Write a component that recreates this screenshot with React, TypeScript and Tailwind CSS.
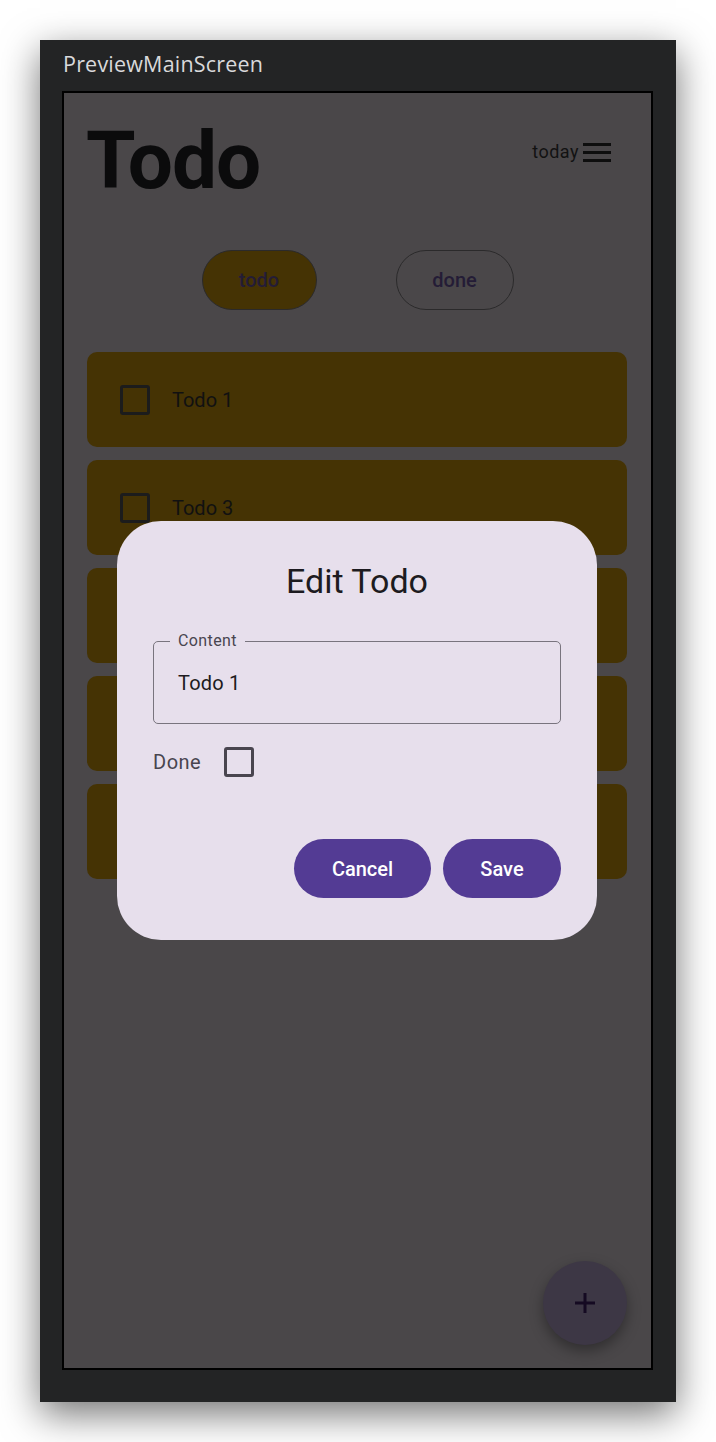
import React from "react";

const todos = ["Todo 1", "Todo 3", "", "", ""];

function Box({ className }: { className: string }) {
  return <span className={`block shrink-0 rounded-[3px] border-[3px] ${className}`} />;
}

export default function App() {
  return (
    <div className="min-h-[1442px] w-[716px] bg-white pt-10 pl-10" style={{ fontFamily: "Roboto, 'Noto Sans', sans-serif" }}>
      <div className="w-[636px] h-[1362px] bg-[#232425] shadow-[0_12px_36px_rgba(0,0,0,0.55)] flex flex-col pl-[22px] pt-[11px]">
        <div className="h-[40px] pl-[1px] text-[21.5px] leading-[26px] text-[#d9d9db] tracking-[0.2px]" style={{ fontFamily: "'Open Sans', 'DejaVu Sans', sans-serif" }}>
          PreviewMainScreen
        </div>

        <div className="relative w-[591px] h-[1279px] border-2 border-black bg-[#4a4749] overflow-hidden">
          <div className="flex justify-between items-start pl-[22px] pr-[40px] pt-[28px]">
            <h1 className="text-[80px] leading-[80px] font-bold text-[#0b0b0c] tracking-[-1px]">Todo</h1>
            <div className="flex items-center gap-[4px] mt-[20px]">
              <span className="text-[18px] leading-[22px] text-[#121212] tracking-[0.5px]">today</span>
              <svg width="28" height="22" viewBox="0 0 28 22">
                <rect x="0" y="2" width="28" height="3" fill="#0e0e0e" />
                <rect x="0" y="10" width="28" height="3" fill="#0e0e0e" />
                <rect x="0" y="18" width="28" height="3" fill="#0e0e0e" />
              </svg>
            </div>
          </div>

          <div className="flex justify-center gap-[79px] mt-[49px]">
            <button className="w-[115px] h-[60px] rounded-full bg-[#453304] border-[1.5px] border-[#2b2a2b] text-[20px] font-medium text-[#241c36]">
              todo
            </button>
            <button className="w-[118px] h-[60px] rounded-full border-[1.5px] border-[#2b2a2b] text-[20px] font-medium text-[#241c36]">
              done
            </button>
          </div>

          <div className="flex flex-col gap-[13px] mt-[42px] pl-[23px] pr-[24px]">
            {todos.map((t, i) => (
              <div key={i} className="h-[95px] rounded-[10px] bg-[#453304] flex items-center pl-[33px] gap-[22px]">
                {t && (
                  <>
                    <Box className="w-[30px] h-[30px] border-[#1c1c1c]" />
                    <span className="text-[20px] text-[#111111]">{t}</span>
                  </>
                )}
              </div>
            ))}
          </div>

          <div className="absolute left-[53px] top-[428px] w-[480px] rounded-[44px] bg-[#e7dfec] flex flex-col px-[36px] pt-[38px] pb-[42px]">
            <h2 className="text-center text-[34px] leading-[44px] text-[#1d1b20]">Edit Todo</h2>
            <div className="relative mt-[38px] h-[83px] rounded-[5px] border-[1.5px] border-[#79747e] flex items-center pl-[24px]">
              <span className="absolute -top-[12px] left-[16px] px-[8px] bg-[#e7dfec] text-[16px] leading-[22px] text-[#49454f] tracking-[0.4px]">
                Content
              </span>
              <span className="text-[20px] text-[#1d1b20] tracking-[0.2px]">Todo 1</span>
            </div>
            <div className="flex items-center mt-[23px] h-[30px] gap-[23px]">
              <span className="text-[20px] text-[#49454f] tracking-[0.5px]">Done</span>
              <Box className="w-[30px] h-[30px] border-[#49454f]" />
            </div>
            <div className="flex justify-end gap-[12px] mt-[62px]">
              <button className="w-[137px] h-[59px] rounded-full bg-[#533b94] text-white text-[20px] font-medium">Cancel</button>
              <button className="w-[118px] h-[59px] rounded-full bg-[#533b94] text-white text-[20px] font-medium">Save</button>
            </div>
          </div>

          <div className="absolute right-[24px] bottom-[23px] w-[84px] h-[84px] rounded-full bg-[#3d3745] shadow-[0_6px_14px_rgba(0,0,0,0.35)] flex items-center justify-center">
            <svg width="24" height="24" viewBox="0 0 24 24">
              <path d="M12 2v20M2 12h20" stroke="#150a22" strokeWidth="3" />
            </svg>
          </div>
        </div>
      </div>
    </div>
  );
}
